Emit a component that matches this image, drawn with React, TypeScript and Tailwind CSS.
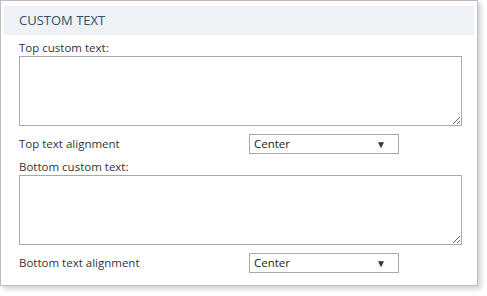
const font = { fontFamily: '"Open Sans", "Noto Sans", Arial, sans-serif' };

function AlignSelect({ value }: { value: string }) {
  return (
    <div className="flex h-[20px] w-[150px] items-center justify-between border border-[#a9a9a9] bg-white pl-[4px] pr-[12px] text-[11.5px] text-[#222]">
      <span>{value}</span>
      <span className="text-[10px] leading-none text-[#333]">▼</span>
    </div>
  );
}

function CustomTextField({ label }: { label: string }) {
  return (
    <div className="flex flex-col">
      <label className="block h-[16px] text-[11.5px] leading-[16px] text-[#333]">{label}</label>
      <textarea className="block h-[70px] w-[443px] border border-[#a9a9a9] bg-white outline-none" />
    </div>
  );
}

function AlignmentRow({ label }: { label: string }) {
  return (
    <div className="flex items-center">
      <span className="w-[230px] text-[11.5px] text-[#333]">{label}</span>
      <AlignSelect value="Center" />
    </div>
  );
}

export default function App() {
  return (
    <div className="h-[296px] w-[487px] bg-white" style={font}>
      <div className="h-[286px] w-[478px] border border-[#bdbdbd] bg-white px-[3px] pt-[5px] shadow-[3px_3px_5px_rgba(0,0,0,0.18)]">
        <div className="flex h-[29px] items-center bg-[#eef2f6] pl-[15px] text-[13px] text-[#34506a]">
          CUSTOM TEXT
        </div>
        <div className="flex flex-col pl-[15px] pt-[5px]">
          <CustomTextField label="Top custom text:" />
          <div className="mt-[8px]">
            <AlignmentRow label="Top text alignment" />
          </div>
          <div className="mt-[5px]">
            <CustomTextField label="Bottom custom text:" />
          </div>
          <div className="mt-[8px]">
            <AlignmentRow label="Bottom text alignment" />
          </div>
        </div>
      </div>
    </div>
  );
}
